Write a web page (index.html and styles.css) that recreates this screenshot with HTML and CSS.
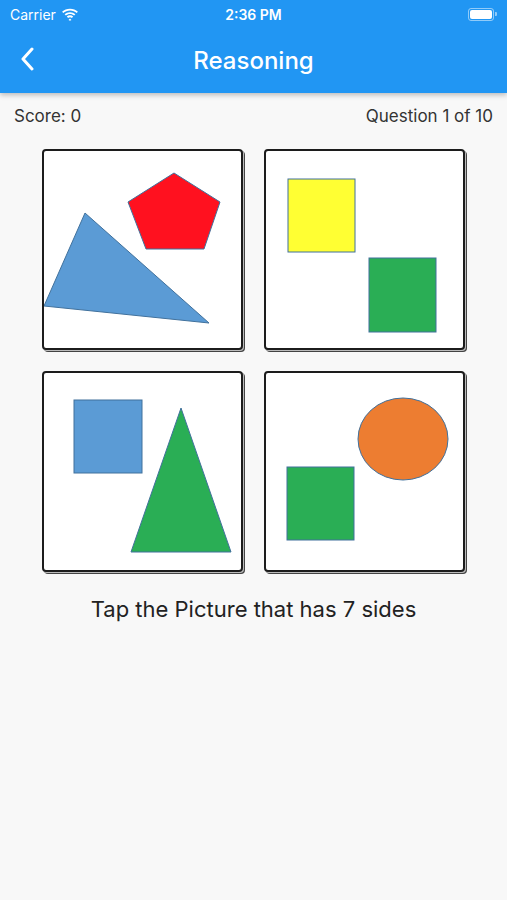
FILE: index.html
```html
<!DOCTYPE html>
<html lang="en">
	<head>
		<meta charset="UTF-8" />
		<meta name="viewport" content="width=device-width, initial-scale=1.0" />
		<title>Reasoning</title>
		<link rel="stylesheet" href="styles.css">
	</head>
	<body>
		<header class="top">
			<div class="status">
				<div class="status-left">
					<span>Carrier</span>
					<svg class="wifi" width="18" height="13" viewBox="0 0 17 12">
						<path d="M8.5 2.2c2.4 0 4.6 0.9 6.3 2.5l1.2-1.3C14 1.5 11.4 0.5 8.5 0.5S3 1.5 1 3.4l1.2 1.3C3.9 3.1 6.1 2.2 8.5 2.2z" fill="#fff"/>
						<path d="M8.5 5.5c1.5 0 2.8 0.5 3.9 1.5l1.2-1.3C12.2 4.5 10.4 3.8 8.5 3.8S4.8 4.5 3.4 5.7l1.2 1.3C5.7 6 7 5.5 8.5 5.5z" fill="#fff"/>
						<path d="M8.5 8.6c0.7 0 1.3 0.2 1.8 0.6l1.2-1.3c-0.8-0.7-1.9-1.1-3-1.1s-2.2 0.4-3 1.1l1.2 1.3C7.2 8.8 7.8 8.6 8.5 8.6z M8.5 9.8l-1.4 1.5 1.4 0.7 1.4-0.7z" fill="#fff"/>
					</svg>
				</div>
				<div class="status-time">2:36 PM</div>
				<div class="status-right">
					<div class="battery"><div class="battery-fill"></div></div>
					<div class="battery-tip"></div>
				</div>
			</div>
			<div class="appbar">
				<svg class="back" width="14" height="24" viewBox="0 0 14 24">
					<path d="M12 2L3 12l9 10" fill="none" stroke="#fff" stroke-width="3" stroke-linecap="round" stroke-linejoin="round"/>
				</svg>
				<h1>Reasoning</h1>
			</div>
		</header>

		<div class="info">
			<span>Score: 0</span>
			<span>Question 1 of 10</span>
		</div>

		<div class="grid">
			<div class="card">
				<svg width="197" height="197" viewBox="2 2 197 197">
					<polygon class="blue" points="43,64 2,157 167,174"/>
					<polygon class="red" points="132,24 178,53 162,100 104,100 86,53"/>
				</svg>
			</div>
			<div class="card">
				<svg width="197" height="197" viewBox="2 2 197 197">
					<rect class="yellow" x="24" y="30" width="67" height="73"/>
					<rect class="green" x="105" y="109" width="67" height="74"/>
				</svg>
			</div>
			<div class="card">
				<svg width="197" height="197" viewBox="2 2 197 197">
					<rect class="blue" x="32" y="29" width="68" height="73"/>
					<polygon class="green" points="139,37 89,181 189,181"/>
				</svg>
			</div>
			<div class="card">
				<svg width="197" height="197" viewBox="2 2 197 197">
					<ellipse class="orange" cx="139" cy="68" rx="45" ry="41"/>
					<rect class="green" x="23" y="96" width="67" height="73"/>
				</svg>
			</div>
		</div>

		<p class="prompt">Tap the Picture that has 7 sides</p>
	</body>
</html>
```

FILE: styles.css
```css
body {
	margin: 0;
	font-family: Inter, "Noto Sans", sans-serif;
	background-color: #f8f8f8;
	color: #333;
}
.top {
	background-color: #2196f3;
	color: #fff;
	box-shadow: 0 2px 5px rgba(0, 0, 0, 0.25);
}
.status {
	height: 28px;
	display: flex;
	align-items: center;
	justify-content: space-between;
	padding: 0 10px;
	font-size: 14px;
}
.status-left {
	display: flex;
	align-items: center;
	gap: 5px;
	width: 120px;
}
.status-time {
	font-weight: 600;
}
.status-right {
	width: 120px;
	display: flex;
	align-items: center;
	justify-content: flex-end;
	gap: 1px;
}
.battery {
	width: 22px;
	height: 9px;
	border: 1px solid rgba(255, 255, 255, 0.5);
	border-radius: 3px;
	padding: 1px;
}
.battery-fill {
	width: 100%;
	height: 100%;
	background-color: #fff;
	border-radius: 2px;
}
.battery-tip {
	width: 2px;
	height: 4px;
	background-color: rgba(255, 255, 255, 0.5);
	border-radius: 0 1px 1px 0;
}
.appbar {
	height: 65px;
	display: flex;
	align-items: center;
	justify-content: center;
	position: relative;
}
.back {
	position: absolute;
	left: 20px;
	top: 48%;
	transform: translateY(-50%);
}
.appbar h1 {
	margin: 0;
	font-size: 24px;
	font-weight: 500;
}
.info {
	display: flex;
	justify-content: space-between;
	padding: 12px 14px 0;
	font-size: 17px;
	line-height: 22px;
}
.grid {
	display: grid;
	grid-template-columns: 201px 201px;
	gap: 21px;
	justify-content: center;
	margin-top: 22px;
}
.card {
	width: 201px;
	height: 201px;
	box-sizing: border-box;
	border: 2px solid #1c1c1c;
	border-radius: 4px;
	background-color: #fff;
	box-shadow: 1px 1px 0 #bbb, 2px 2px 0 #444;
}
.card svg {
	display: block;
}
.card polygon,
.card rect,
.card ellipse {
	stroke: #41719c;
	stroke-width: 1;
}
.blue {
	fill: #5b9bd5;
}
.red {
	fill: #ff111f;
}
.yellow {
	fill: #ffff33;
}
.green {
	fill: #2aae55;
}
.orange {
	fill: #ed7d31;
}
.prompt {
	margin: 22px 0 0;
	text-align: center;
	font-size: 22px;
	line-height: 30px;
	color: #222;
}
```
